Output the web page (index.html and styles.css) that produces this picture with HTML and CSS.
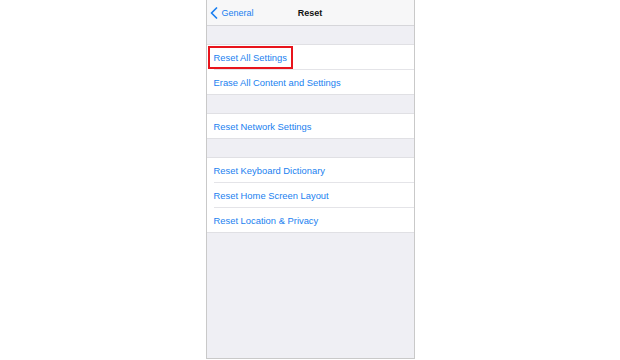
FILE: index.html
```html
<!DOCTYPE html>
<html lang="en">

<head>
  <meta charset="UTF-8">
  <meta name="viewport" content="width=device-width, initial-scale=1.0">
  <title>Reset</title>
  <link rel="stylesheet" href="styles.css">
</head>

<body>
  <div class="phone">
    <header class="nav">
      <a class="back" href="#">
        <svg class="chevron" width="8" height="12" viewBox="0 0 8 12">
          <path d="M6.5 1 L1.5 6 L6.5 11" fill="none" stroke="#1a7ff0" stroke-width="1.7" stroke-linecap="round" stroke-linejoin="round"/>
        </svg>
        <span>General</span>
      </a>
      <h1 class="title">Reset</h1>
    </header>

    <div class="gap"></div>
    <ul class="group">
      <li class="row"><span class="highlight">Reset All Settings</span></li>
      <li class="row">Erase All Content and Settings</li>
    </ul>

    <div class="gap"></div>
    <ul class="group">
      <li class="row">Reset Network Settings</li>
    </ul>

    <div class="gap"></div>
    <ul class="group">
      <li class="row">Reset Keyboard Dictionary</li>
      <li class="row">Reset Home Screen Layout</li>
      <li class="row">Reset Location &amp; Privacy</li>
    </ul>
  </div>
</body>
</html>
```

FILE: styles.css
```css
body {
  margin: 0;
  background: #fff;
  font-family: 'Liberation Sans', Arial, sans-serif;
  display: flex;
  justify-content: center;
}

.phone {
  width: 207px;
  height: 358px;
  border: 1px solid #c9c9c9;
  border-top: none;
  background-color: #efeff4;
  display: flex;
  flex-direction: column;
}

.nav {
  height: 25px;
  background-color: #f7f7f8;
  border-bottom: 1px solid #d6d6da;
  display: flex;
  align-items: center;
  position: relative;
}

.back {
  display: flex;
  align-items: center;
  gap: 4px;
  padding-left: 3px;
  color: #1a7ff0;
  text-decoration: none;
  font-size: 9px;
}

.title {
  position: absolute;
  left: 0;
  right: 0;
  margin: 0;
  text-align: center;
  font-size: 9px;
  font-weight: bold;
  color: #111;
  pointer-events: none;
}

.gap {
  height: 18px;
}

.group {
  list-style: none;
  margin: 0;
  padding: 0 0 0 7px;
  background: #fff;
  border-top: 1px solid #e0e0e4;
  border-bottom: 1px solid #e0e0e4;
}

.row {
  height: 24px;
  display: flex;
  align-items: center;
  font-size: 9.4px;
  color: #1a7ff0;
  border-bottom: 1px solid #e4e4e8;
}

.row:last-child {
  border-bottom: none;
}

.highlight {
  outline: 2px solid #e8141c;
  outline-offset: 4px;
  margin-left: 0;
}
```
